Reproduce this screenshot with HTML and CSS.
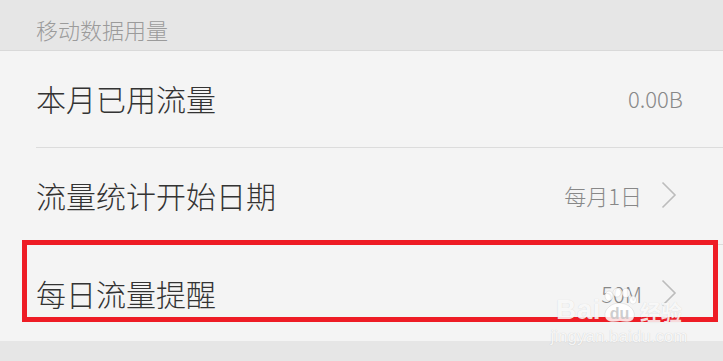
FILE: index.html
```html
<!DOCTYPE html>
<html lang="zh-CN">
<head>
<meta charset="utf-8">
<title>移动数据用量</title>
<link rel="stylesheet" href="styles.css">
</head>
<body>
<div class="screen">
  <div class="section-header">移动数据用量</div>
  <div class="list">
    <div class="row">
      <span class="title">本月已用流量</span>
      <span class="value">0.00B</span>
    </div>
    <div class="row has-arrow">
      <span class="title">流量统计开始日期</span>
      <span class="value">每月1日</span>
      <svg class="chev" width="16" height="28" viewBox="0 0 16 28"><polyline points="1.5,1.5 14,14 1.5,26.5" fill="none" stroke="#bcbcbc" stroke-width="1.6"/></svg>
    </div>
    <div class="row has-arrow last">
      <span class="title">每日流量提醒</span>
      <span class="value">50M</span>
      <svg class="chev" width="16" height="28" viewBox="0 0 16 28"><polyline points="1.5,1.5 14,14 1.5,26.5" fill="none" stroke="#bcbcbc" stroke-width="1.6"/></svg>
    </div>
  </div>
  <div class="highlight"></div>
  <div class="watermark">
    <div class="wm-logo">
      <span class="wm-bai">Bai</span>
      <svg class="wm-paw" width="38" height="36" viewBox="0 0 38 36">
        <ellipse cx="8" cy="8" rx="4" ry="5" fill="rgba(255,255,255,0.85)" stroke="rgba(0,0,0,0.08)"/>
        <ellipse cx="16" cy="4.5" rx="4" ry="4.5" fill="rgba(255,255,255,0.85)" stroke="rgba(0,0,0,0.08)"/>
        <ellipse cx="25" cy="5" rx="4" ry="4.5" fill="rgba(255,255,255,0.85)" stroke="rgba(0,0,0,0.08)"/>
        <ellipse cx="32" cy="12" rx="3.5" ry="4" fill="rgba(255,255,255,0.85)" stroke="rgba(0,0,0,0.08)"/>
        <path d="M4 28 C3 21 11 15 18 15 C26 15 35 21 33 29 C32 35 24 34 19 33 C13 34 5 35 4 28 Z" fill="rgba(255,255,255,0.85)" stroke="rgba(0,0,0,0.08)"/>
        <text x="18.5" y="31" text-anchor="middle" font-family="Liberation Sans, sans-serif" font-weight="700" font-size="16" fill="rgba(200,200,200,0.9)">du</text>
      </svg>
      <span class="wm-jy">经验</span>
    </div>
    <div class="wm-url">jingyan.baidu.com</div>
  </div>
</div>
</body>
</html>
```

FILE: styles.css
```css
html, body {
  margin: 0;
  padding: 0;
}
body {
  background: #e6e6e6;
  font-family: "Noto Sans CJK SC", "Noto Sans", sans-serif;
}
.screen {
  position: relative;
  width: 723px;
  height: 361px;
  overflow: hidden;
  background: #e6e6e6;
}
.section-header {
  box-sizing: border-box;
  height: 51px;
  padding: 18px 0 0 36px;
  font-size: 22px;
  line-height: 22px;
  font-weight: 300;
  color: #9b9b9b;
  border-bottom: 1px solid #d9d9d9;
}
.list {
  background: #f4f4f4;
  padding-left: 36px;
}
.row {
  box-sizing: border-box;
  height: 97px;
  display: flex;
  align-items: center;
  border-bottom: 1px solid #dcdcdc;
  padding-right: 40px;
  padding-bottom: 2px;
}
.row.last {
  height: 96px;
  border-bottom: none;
  padding-bottom: 0;
}
.row.has-arrow {
  padding-right: 46px;
}
.title {
  flex: 1;
  font-size: 30px;
  line-height: 40px;
  font-weight: 300;
  color: #333333;
}
.value {
  font-size: 22px;
  line-height: 30px;
  font-weight: 300;
  color: #888888;
}
.chev {
  margin-left: 19px;
  display: block;
}
.highlight {
  position: absolute;
  left: 22px;
  top: 240px;
  width: 686px;
  height: 72px;
  border: 5px solid #ee1c25;
}
.watermark {
  position: absolute;
  left: 553px;
  top: 288px;
  width: 132px;
  display: flex;
  flex-direction: column;
  align-items: center;
  color: rgba(255, 255, 255, 0.85);
}
.wm-logo {
  display: flex;
  align-items: flex-end;
  height: 36px;
}
.wm-bai {
  font-family: "Liberation Sans", Arial, sans-serif;
  font-weight: 700;
  font-size: 28px;
  line-height: 28px;
  letter-spacing: 0.5px;
  text-shadow: 0 0 1px rgba(0, 0, 0, 0.15);
}
.wm-paw {
  display: block;
  margin: 0 1px 0 0;
}
.wm-jy {
  font-size: 21px;
  line-height: 26px;
  font-weight: 700;
  text-shadow: 0 0 1px rgba(0, 0, 0, 0.15);
}
.wm-url {
  margin-top: 5px;
  font-family: "Liberation Sans", Arial, sans-serif;
  font-size: 17px;
  line-height: 16px;
  text-shadow: 0 0 1px rgba(0, 0, 0, 0.2);
}
```
